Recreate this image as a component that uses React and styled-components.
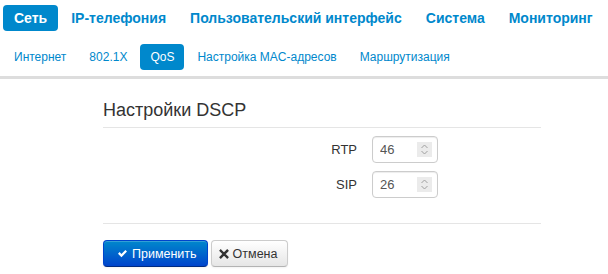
import React, { useState } from 'react';
import styled, { createGlobalStyle } from 'styled-components';

const GlobalStyle = createGlobalStyle`
  body {
    margin: 0;
    font-family: "Liberation Sans", Arial, sans-serif;
    background: #fff;
    color: #333;
  }
`;

const Page = styled.div`
  width: 608px;
  height: 274px;
  overflow: hidden;
`;

const TopNav = styled.nav`
  display: flex;
  gap: 2px;
  padding: 5px 3px 0;
`;

const TopItem = styled.a`
  display: block;
  height: 26px;
  line-height: 26px;
  padding: 0 11px;
  border-radius: 4px;
  font-size: 14px;
  font-weight: bold;
  white-space: nowrap;
  color: ${(p) => (p.$active ? '#fff' : '#0088cc')};
  background: ${(p) => (p.$active ? '#0088cc' : 'transparent')};
`;

const SubNav = styled.nav`
  display: flex;
  gap: 3px;
  padding: 13px 3px 6px 4px;
  height: 26px;
  border-bottom: 3px solid #dddddd;
`;

const SubItem = styled.a`
  display: block;
  height: 26px;
  line-height: 26px;
  padding: 0 10px;
  border-radius: 4px;
  font-size: 12px;
  white-space: nowrap;
  color: ${(p) => (p.$active ? '#fff' : '#0088cc')};
  background: ${(p) => (p.$active ? '#0088cc' : 'transparent')};
`;

const Content = styled.div`
  width: 438px;
  margin-left: 103px;
  padding-top: 19px;
`;

const Legend = styled.h2`
  margin: 0;
  font-size: 18px;
  font-weight: normal;
  color: #333;
  line-height: 24px;
  padding-bottom: 5px;
  border-bottom: 1px solid #e5e5e5;
`;

const Fields = styled.div`
  display: flex;
  flex-direction: column;
  gap: 8px;
  padding: 8px 0 25px;
  border-bottom: 1px solid #e5e5e5;
`;

const Row = styled.div`
  display: grid;
  grid-template-columns: 254px 66px;
  column-gap: 15px;
  align-items: center;
`;

const Label = styled.label`
  text-align: right;
  font-size: 13px;
  color: #333;
`;

const SpinBox = styled.div`
  position: relative;
  width: 66px;
  height: 27px;
  box-sizing: border-box;
  border: 1px solid #cccccc;
  border-radius: 4px;
  box-shadow: inset 0 1px 1px rgba(0, 0, 0, 0.075);
  display: flex;
  align-items: center;
`;

const NumInput = styled.input`
  border: none;
  outline: none;
  background: transparent;
  width: 40px;
  padding: 0 0 0 7px;
  font-family: "Liberation Sans", Arial, sans-serif;
  font-size: 13px;
  color: #555;
`;

const Spinner = styled.span`
  position: absolute;
  right: 5px;
  top: 5px;
  width: 15px;
  height: 15px;
  background: #ebebeb;
  display: flex;
  align-items: center;
  justify-content: center;
`;

const Actions = styled.div`
  display: flex;
  gap: 3px;
  padding-top: 16px;
`;

const Button = styled.button`
  display: flex;
  align-items: center;
  gap: ${(p) => (p.$primary ? '4px' : '4px')};
  height: 27px;
  box-sizing: border-box;
  padding: 0 10px 0 ${(p) => (p.$primary ? '13px' : '7px')};
  border-radius: 4px;
  font-family: "Liberation Sans", Arial, sans-serif;
  font-size: 12.5px;
  cursor: pointer;
  border: 1px solid ${(p) => (p.$primary ? '#0044cc' : '#cccccc')};
  border-bottom-color: ${(p) => (p.$primary ? '#002a80' : '#b3b3b3')};
  color: ${(p) => (p.$primary ? '#fff' : '#333')};
  background: ${(p) =>
    p.$primary
      ? 'linear-gradient(to bottom, #0088cc, #0044cc)'
      : 'linear-gradient(to bottom, #ffffff, #e6e6e6)'};
  box-shadow: inset 0 1px 0 rgba(255, 255, 255, 0.2), 0 1px 2px rgba(0, 0, 0, 0.05);
`;

const SpinIcon = () => (
  <svg width="9" height="11" viewBox="0 0 9 11" fill="none" stroke="#a0a0a0" strokeWidth="1">
    <path d="M1.5 4 L4.5 1 L7.5 4" />
    <path d="M1.5 7 L4.5 10 L7.5 7" />
  </svg>
);

const CheckIcon = () => (
  <svg width="11" height="9" viewBox="0 0 13 11">
    <path d="M1 5.8 L3 3.8 L5.2 6 L10 1.2 L12 3.2 L5.2 10 Z" fill="#fff" />
  </svg>
);

const CrossIcon = () => (
  <svg width="10" height="10" viewBox="0 0 10 10">
    <path d="M1.8 1.8 L8.2 8.2 M8.2 1.8 L1.8 8.2" stroke="#333" strokeWidth="2.4" strokeLinecap="square" />
  </svg>
);

const NumberField = ({ label, value, onChange }) => (
  <Row>
    <Label>{label}</Label>
    <SpinBox>
      <NumInput value={value} onChange={(e) => onChange(e.target.value)} />
      <Spinner>
        <SpinIcon />
      </Spinner>
    </SpinBox>
  </Row>
);

const topItems = ['Сеть', 'IP-телефония', 'Пользовательский интерфейс', 'Система', 'Мониторинг'];
const subItems = ['Интернет', '802.1X', 'QoS', 'Настройка MAC-адресов', 'Маршрутизация'];

const App = () => {
  const [rtp, setRtp] = useState('46');
  const [sip, setSip] = useState('26');

  return (
    <Page>
      <GlobalStyle />
      <TopNav>
        {topItems.map((t) => (
          <TopItem key={t} $active={t === 'Сеть'}>{t}</TopItem>
        ))}
      </TopNav>
      <SubNav>
        {subItems.map((t) => (
          <SubItem key={t} $active={t === 'QoS'}>{t}</SubItem>
        ))}
      </SubNav>
      <Content>
        <Legend>Настройки DSCP</Legend>
        <Fields>
          <NumberField label="RTP" value={rtp} onChange={setRtp} />
          <NumberField label="SIP" value={sip} onChange={setSip} />
        </Fields>
        <Actions>
          <Button $primary>
            <CheckIcon />
            Применить
          </Button>
          <Button>
            <CrossIcon />
            Отмена
          </Button>
        </Actions>
      </Content>
    </Page>
  );
};

export default App;
